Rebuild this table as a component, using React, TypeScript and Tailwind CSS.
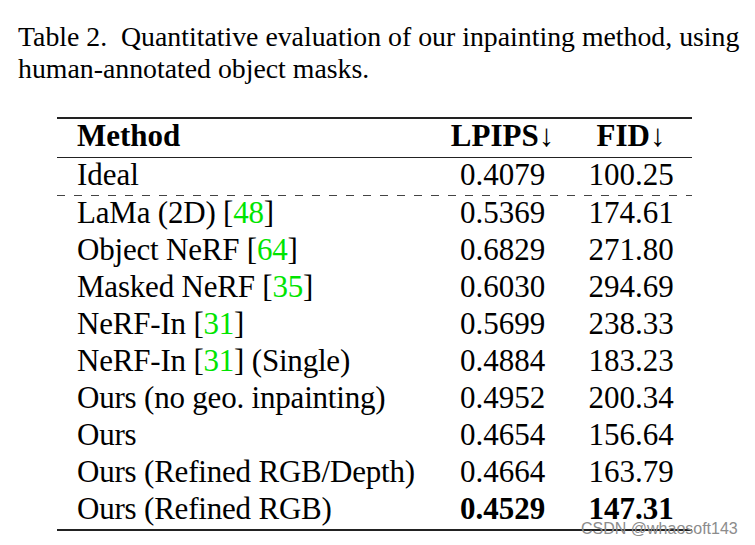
const rows: { name: string; cite?: string; tail?: string; lpips: string; fid: string; bold?: boolean }[] = [
  { name: 'LaMa (2D) ', cite: '48', lpips: '0.5369', fid: '174.61' },
  { name: 'Object NeRF ', cite: '64', lpips: '0.6829', fid: '271.80' },
  { name: 'Masked NeRF ', cite: '35', lpips: '0.6030', fid: '294.69' },
  { name: 'NeRF-In ', cite: '31', lpips: '0.5699', fid: '238.33' },
  { name: 'NeRF-In ', cite: '31', tail: ' (Single)', lpips: '0.4884', fid: '183.23' },
  { name: 'Ours (no geo. inpainting)', lpips: '0.4952', fid: '200.34' },
  { name: 'Ours', lpips: '0.4654', fid: '156.64' },
  { name: 'Ours (Refined RGB/Depth)', lpips: '0.4664', fid: '163.79' },
  { name: 'Ours (Refined RGB)', lpips: '0.4529', fid: '147.31', bold: true },
];

function Row({ children, className = '' }: { children: React.ReactNode; className?: string }) {
  return <div className={`grid grid-cols-[378px_135px_122px] h-[37px] leading-[33px] ${className}`}>{children}</div>;
}

export default function App() {
  return (
    <div className="relative w-[755px] h-[545px] bg-white text-black overflow-hidden" style={{ fontFamily: '"Liberation Serif", "Times New Roman", serif' }}>
      <p className="pl-[18px] pt-[21px] text-[27.8px] leading-[32px] whitespace-nowrap">
        Table 2.&nbsp; Quantitative evaluation of our inpainting method, using
        <br />
        human-annotated object masks.
      </p>

      <div className="ml-[57px] mt-[32px] w-[635px] text-[31px]">
        <div className="h-[1.5px] bg-[#222]" />
        <Row className="h-[38px] font-bold">
          <div className="pl-[20px]">Method</div>
          <div className="text-center">LPIPS↓</div>
          <div className="text-center">FID↓</div>
        </Row>
        <div className="h-[1.5px] bg-[#222]" />
        <Row>
          <div className="pl-[20px]">Ideal</div>
          <div className="text-center">0.4079</div>
          <div className="text-center">100.25</div>
        </Row>
        <div className="h-px bg-[repeating-linear-gradient(to_right,#444_0_8px,transparent_8px_17px)]" />
        {rows.map((r, i) => (
          <Row key={i}>
            <div className="pl-[20px] whitespace-nowrap tracking-[-0.2px]">
              {r.name}
              {r.cite && (
                <>
                  [<span className="text-[#00e400]">{r.cite}</span>]
                </>
              )}
              {r.tail}
            </div>
            <div className={`text-center ${r.bold ? 'font-bold' : ''}`}>{r.lpips}</div>
            <div className={`text-center ${r.bold ? 'font-bold' : ''}`}>{r.fid}</div>
          </Row>
        ))}
        <div className="h-[2px] bg-[#222]" />
      </div>

      <div
        className="absolute left-[581px] top-[522px] text-[16px] text-[#8c8c8c] leading-[14px]"
        style={{ fontFamily: '"Liberation Sans", Arial, sans-serif' }}
      >
        CSDN @whaosoft143
      </div>
    </div>
  );
}
